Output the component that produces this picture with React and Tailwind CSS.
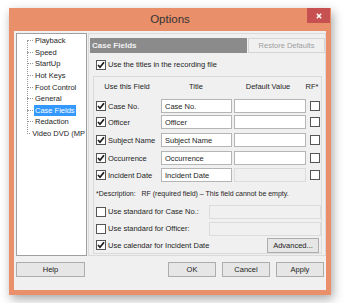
import React from 'react';

const font = { fontFamily: '"Liberation Sans", Arial, sans-serif' };

const Check = ({ checked = false }) => (
  <span className="w-[10px] h-[10px] border border-[#555] bg-white flex items-center justify-center shrink-0">
    {checked && (
      <svg width="8" height="8" viewBox="0 0 8 8">
        <path d="M1 4 L3 6.2 L7 1.2" fill="none" stroke="#1a1a1a" strokeWidth="1.7" />
      </svg>
    )}
  </span>
);

const Field = ({ value = '', disabled = false, className = '' }) => (
  <div
    className={`h-[14px] border flex items-center px-[3px] text-[7.5px] ${
      disabled ? 'bg-[#f0f0f0] border-[#dcdcdc]' : 'bg-white border-[#b5b5b5]'
    } ${className}`}
  >
    {value}
  </div>
);

const Btn = ({ label, className = '', disabled = false }) => (
  <div
    className={`h-[15px] border flex items-center justify-center text-[7.5px] bg-[#e6e6e6] ${
      disabled ? 'text-[#a0a0a0] border-[#d5d5d5]' : 'text-[#222] border-[#adadad]'
    } ${className}`}
  >
    {label}
  </div>
);

const treeItems = ['Playback', 'Speed', 'StartUp', 'Hot Keys', 'Foot Control', 'General', 'Case Fields', 'Redaction', 'Video DVD (MP'];

const rows = [
  { label: 'Case No.', mt: 'mt-0' },
  { label: 'Officer', mt: 'mt-[2px]' },
  { label: 'Subject Name', mt: 'mt-[4px]' },
  { label: 'Occurrence', mt: 'mt-[4px]' },
  { label: 'Incident Date', mt: 'mt-[3px]', noDefault: true },
];

export default function App() {
  return (
    <div className="w-[350px] h-[303px] bg-white overflow-hidden text-[#1e1e1e]" style={font}>
      <div className="ml-[9px] mt-[8px] w-[322px] h-[287px] bg-[#e9906b] flex flex-col shadow-[2px_4px_10px_rgba(0,0,0,0.35)]">
        {/* title bar */}
        <div className="relative h-[23px] flex items-center justify-center">
          <span className="text-[11.5px] text-[#333] mt-[1px]">Options</span>
          <div className="absolute right-[1px] top-0 w-[23px] h-[15px] bg-[#c75050] flex items-center justify-center">
            <svg width="6" height="6" viewBox="0 0 6 6">
              <path d="M0.8 0.8 L5.2 5.2 M5.2 0.8 L0.8 5.2" stroke="#fff" strokeWidth="1.5" />
            </svg>
          </div>
        </div>

        {/* client */}
        <div className="mx-[5px] mb-[5px] flex-1 bg-[#f0f0f0] flex flex-col">
          <div className="flex mt-[2px] ml-[2px] h-[223px]">
            {/* tree */}
            <div className="w-[71px] h-full bg-white border border-[#a0a0a0] relative">
              <div className="absolute left-[10px] top-[6px] h-[94px] border-l border-dotted border-[#999]" />
              <div className="pt-[1px]">
                {treeItems.map((t) => (
                  <div key={t} className="h-[11.6px] flex items-center">
                    <span className="ml-[10px] w-[6px] border-t border-dotted border-[#999]" />
                    <span
                      className={`ml-[1px] px-[1px] leading-[11px] text-[7.5px] whitespace-nowrap ${
                        t === 'Case Fields' ? 'bg-[#3399ff] text-white' : ''
                      }`}
                    >
                      {t}
                    </span>
                  </div>
                ))}
              </div>
            </div>

            {/* right panel */}
            <div className="ml-[1px] w-[239px] h-full border border-[#dadada] flex flex-col">
              <div className="flex mt-[4px] ml-[1px] h-[15px]">
                <div className="w-[157px] bg-[#8b8b8b] text-[#f2f2f2] font-bold text-[8px] flex items-center pl-[2px]">
                  Case Fields
                </div>
                <Btn label="Restore Defaults" disabled className="ml-[1px] w-[77px] bg-[#f0f0f0]" />
              </div>
              <div className="flex items-center ml-[7px] mt-[6px] h-[12px]">
                <Check checked />
                <span className="ml-[2px] text-[7.5px]">Use the titles in the recording file</span>
              </div>

              <div className="ml-[4px] mt-[6px] w-[229px] flex-1 mb-[4px] border border-[#dadada] flex flex-col">
                <div className="flex items-center h-[14px] mt-[2px] text-[7.5px]">
                  <span className="w-[66px] text-center">Use this Field</span>
                  <span className="w-[72px] text-center">Title</span>
                  <span className="w-[72px] text-center">Default Value</span>
                  <span className="w-[16px] text-center">RF*</span>
                </div>
                <div className="mt-[6px] flex flex-col">
                  {rows.map((r) => (
                    <div key={r.label} className={`flex items-center h-[14px] ${r.mt}`}>
                      <div className="w-[67px] flex items-center pl-[2px]">
                        <Check checked />
                        <span className="ml-[2px] text-[7.5px] whitespace-nowrap">{r.label}</span>
                      </div>
                      <Field value={r.label} className="w-[71px]" />
                      <Field disabled={r.noDefault} className="ml-[2px] w-[72px]" />
                      <div className="ml-[4px]">
                        <Check />
                      </div>
                    </div>
                  ))}
                </div>
                <div className="mt-[7px] ml-[2px] text-[7px] whitespace-nowrap">
                  *Description:&nbsp;&nbsp; RF (required field) – This field cannot be empty.
                </div>
                <div className="flex items-center mt-[5px] h-[14px] pl-[2px]">
                  <Check />
                  <span className="ml-[2px] text-[7.5px] w-[101px] whitespace-nowrap">Use standard for Case No.:</span>
                  <Field disabled className="w-[112px]" />
                </div>
                <div className="flex items-center mt-[3px] h-[14px] pl-[2px]">
                  <Check />
                  <span className="ml-[2px] text-[7.5px] w-[101px] whitespace-nowrap">Use standard for Officer:</span>
                  <Field disabled className="w-[112px]" />
                </div>
                <div className="flex items-center mt-[2px] h-[15px] pl-[2px]">
                  <Check checked />
                  <span className="ml-[2px] text-[7.5px] whitespace-nowrap">Use calendar for Incident Date</span>
                  <Btn label="Advanced..." className="ml-auto mr-[2px] w-[52px]" />
                </div>
              </div>
            </div>
          </div>

          {/* bottom buttons */}
          <div className="flex mt-[6px] ml-[2px] mr-[2px]">
            <Btn label="Help" className="w-[69px]" />
            <Btn label="OK" className="ml-auto w-[48px] border-[#3c8fe0]" />
            <Btn label="Cancel" className="ml-[6px] w-[48px]" />
            <Btn label="Apply" className="ml-[6px] w-[48px]" />
          </div>
        </div>
      </div>
    </div>
  );
}
